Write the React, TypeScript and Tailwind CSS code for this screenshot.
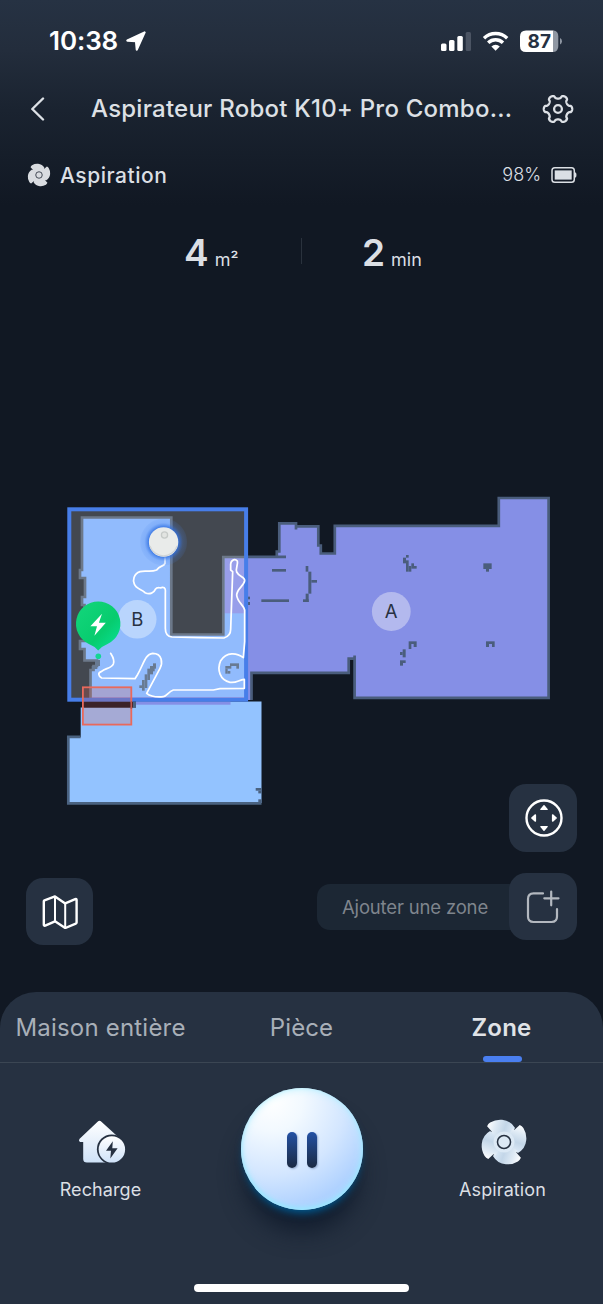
import React from "react";

const gearPath = (() => {
  const pts: string[] = [];
  for (let i = 0; i < 240; i++) {
    const a = (i / 240) * Math.PI * 2;
    const c = Math.cos(6 * a);
    const wave = Math.sign(c) * Math.pow(Math.abs(c), 0.45);
    const r = 12.3 + 1.9 * wave;
    pts.push(`${(r * Math.cos(a)).toFixed(2)},${(r * Math.sin(a)).toFixed(2)}`);
  }
  return `M${pts.join("L")}Z`;
})();

const BLADE = "M-17.6 -16.4Q-16.6 -18.8 -14.5 -20.2Q-8.6 -23.8 -2 -23.2Q7 -22.4 11.5 -14.5L0 0L-14 -9L-12.8 -11Z";

function Fan({ className, fill, ring }: { className: string; fill: string; ring: string }) {
  return (
    <svg viewBox="-25 -25 50 50" className={className}>
      <defs>
        <linearGradient id="blade" gradientUnits="userSpaceOnUse" x1="-18" y1="-18" x2="12" y2="-8">
          <stop offset="0" stopColor="#ffffff" />
          <stop offset=".3" stopColor="#dde9f4" />
          <stop offset=".6" stopColor="#c3d6e8" />
          <stop offset="1" stopColor="#e3effb" />
        </linearGradient>
      </defs>
      {[0, 90, 180, 270].map((r) => (
        <path key={r} d={BLADE} fill={fill} transform={`rotate(${r})`} />
      ))}
      <circle r="11" fill={fill === "url(#blade)" ? "#dce9f5" : fill} />
      <circle r="6.8" fill="none" stroke={ring} strokeWidth="1.6" />
    </svg>
  );
}

function StatusBar() {
  return (
    <div className="flex h-[81px] items-center pl-[49px] pr-[40px]">
      <span className="w-[71px] text-[26px] font-semibold leading-none tracking-[-0.1px] text-white">10:38</span>
      <svg viewBox="0 0 20 20" className="ml-[6px] h-[20px] w-[20px]">
        <path d="M18.6 1.4L1.4 9.6L10 10.2L10.8 18.6Z" fill="#fff" stroke="#fff" strokeWidth="2.2" strokeLinejoin="round" />
      </svg>
      <div className="flex-1" />
      <svg viewBox="0 0 122 24" className="h-[24px] w-[122px]">
        <rect x="0" y="14.5" width="5.5" height="7.5" rx="1.5" fill="#fff" />
        <rect x="8" y="11" width="5.5" height="11" rx="1.5" fill="#fff" />
        <rect x="16.3" y="7" width="5.5" height="15" rx="1.5" fill="#fff" />
        <rect x="24.7" y="3" width="5.3" height="19" rx="1.5" fill="#4b5463" />
        <g fill="none" stroke="#fff" strokeWidth="3.4">
          <path d="M43 9.2A16.8 16.8 0 0 1 66.2 9.2" />
          <path d="M47.2 13.7A10.6 10.6 0 0 1 62 13.7" />
        </g>
        <path d="M50.4 17.5A6 6 0 0 1 58.8 17.5L54.6 21.8Z" fill="#fff" />
        <path d="M85 1.5H112.5V22.9H85Q79 22.9 79 16.9V7.5Q79 1.5 85 1.5Z" fill="#fff" />
        <path d="M112.5 1.5Q117.3 2 117.3 7.5V16.9Q117.3 22.4 112.5 22.9Z" fill="#8f97a3" />
        <path d="M119 9Q121 10 121 12.2Q121 14.4 119 15.4Z" fill="#8f97a3" />
        <text x="98.3" y="19.1" textAnchor="middle" fontSize="19" fontWeight="700" fill="#263142" fontFamily="Inter, sans-serif">87</text>
      </svg>
    </div>
  );
}

function TopBar() {
  return (
    <div className="flex h-[55px] items-center pl-[30px] pr-[29px]">
      <svg viewBox="0 0 15 24" className="h-[24px] w-[15px]" fill="none" stroke="#dde1e6" strokeWidth="2.4" strokeLinecap="round" strokeLinejoin="round">
        <path d="M13 1.5L2.3 12L13 22.5" />
      </svg>
      <h1 className="ml-[46px] flex-1 whitespace-nowrap text-[24px] font-medium leading-none tracking-[0.23px] text-[#dde0e5]">
        Aspirateur Robot K10+ Pro Combo...
      </h1>
      <svg viewBox="-16 -16 32 32" className="h-[32px] w-[32px] shrink-0" fill="none" stroke="#dde1e6" strokeWidth="2.3" strokeLinejoin="round">
        <path d={gearPath} />
        <circle r="3.9" />
      </svg>
    </div>
  );
}

const R = ({ d }: { d: number[][] }) => (
  <>
    {d.map(([x1, y1, x2, y2], i) => (
      <rect key={i} x={x1} y={y1} width={x2 - x1} height={y2 - y1} />
    ))}
  </>
);

function FloorMap() {
  return (
    <svg viewBox="0 290 603 702" className="block h-[702px] w-[603px]" fontFamily="Inter, sans-serif">
      <defs>
        <linearGradient id="pin" x1="0" y1="0" x2="1" y2="1">
          <stop offset="0" stopColor="#14d67c" />
          <stop offset=".6" stopColor="#07cc6e" />
          <stop offset="1" stopColor="#08e39a" />
        </linearGradient>
        <radialGradient id="glow">
          <stop offset=".6" stopColor="#2f6fe0" stopOpacity=".95" />
          <stop offset=".76" stopColor="#3f7ce8" stopOpacity=".4" />
          <stop offset=".82" stopColor="#4a86ee" stopOpacity=".22" />
          <stop offset="1" stopColor="#4a86ee" stopOpacity=".1" />
        </radialGradient>
      </defs>

      {/* living area A */}
      <path
        d="M246 556.8H276.8V551.5H279.3V523.3H296V526.3H318.3V545.5H320.8V553.5H334.8V525.8H498.8V498H548.6V697.8H354.6V658.7H348.7V672.8H251.5V700H246Z"
        fill="#858fe6"
      />
      <path
        d="M246 556.8H286M276.8 556.8V551.5H279.3V523.3H296V529.5M296 526.3H318.3V545.5H320.8V553.5H334.8V525.8H498.8V498H548.6V697.8H354.6V655.5M354.6 658.7H348.7V672.8H251.5V700"
        fill="none"
        stroke="#4a5d7c"
        strokeWidth="2.7"
      />
      <g transform="translate(240 485) scale(.33333)" fill="#4a5d7c">
        <R
          d={[
            [96, 252, 138, 260], [64, 343, 147, 351], [197, 243, 205, 260], [205, 260, 214, 326], [214, 285, 231, 293],
            [197, 326, 206, 351], [189, 343, 206, 351], [22, 335, 30, 343], [22, 351, 30, 360],
            [498, 210, 506, 218], [489, 218, 498, 235], [498, 226, 506, 260], [506, 243, 514, 260], [514, 235, 522, 251], [522, 243, 530, 251],
            [730, 235, 755, 252], [738, 252, 747, 260],
            [738, 469, 764, 477], [738, 477, 747, 486], [756, 477, 764, 486],
            [506, 469, 530, 477], [506, 477, 514, 492], [521, 477, 530, 486],
            [488, 493, 497, 517], [480, 501, 488, 510], [480, 526, 497, 534], [480, 534, 489, 542],
          ]}
        />
      </g>

      {/* room below the selection */}
      <path d="M80.7 707.5H136V701.5H261.5V803H68.3V737H80.7Z" fill="#93c3ff" />
      <path d="M80.7 736.8H68.3V803.4H261.5" fill="none" stroke="#4a6280" strokeWidth="2.7" />
      <g fill="#4a6280">
        <rect x="133" y="702" width="3" height="5.5" />
        <rect x="255.7" y="788" width="5.8" height="2.7" />
        <rect x="258.3" y="790.7" width="3.2" height="2.7" />
        <rect x="258.3" y="799.3" width="3.2" height="3" />
      </g>
      <rect x="136" y="701.5" width="94.5" height="3.2" fill="#858fe6" />

      {/* selected zone */}
      <rect x="69" y="509" width="177" height="191" fill="#434850" />
      <path
        d="M82 517.5H171.3V634.5H223.3V557H246V699H90.5V670H93.5V666H97V660.5H84.5V649H80V641H84.5V605H82V597H85V578H80V570H82Z"
        fill="#91bbfd"
      />
      <rect x="224.5" y="558" width="21.5" height="55.3" fill="#989eea" />
      <rect x="92" y="697" width="154" height="3" fill="#a09fe0" />
      <path
        d="M246 557H223.3V634.5H171.3V517.5H82V570H80V578H85V597H82V605H84.5V641H80V649H84.5V660.5H97V666H93.5V670H90.5V699"
        fill="none"
        stroke="#6c7889"
        strokeWidth="2.7"
      />
      <rect x="69.3" y="509.3" width="176.8" height="190.4" fill="none" stroke="#477ee9" strokeWidth="4" />

      <g transform="translate(50 640) scale(.33333)" fill="#687a92">
        <R
          d={[
            [309, 70, 318, 86], [300, 78, 309, 103], [292, 86, 300, 120], [284, 103, 292, 144], [309, 78, 314, 94], [276, 120, 284, 152], [268, 136, 276, 144],
            [540, 70, 567, 78], [526, 78, 544, 86], [526, 86, 533, 101], [533, 93, 541, 101], [559, 78, 567, 86], [135, 60, 150, 78], [125, 78, 142, 87],
          ]}
        />
      </g>

      <g fill="none" stroke="#fff" strokeWidth="5.2" strokeLinejoin="round" strokeLinecap="round">
        <path
          transform="translate(50 490) scale(.33333)"
          d="M345 200V220C340 232 330 224 320 240C300 248 288 240 270 245C250 252 248 272 253 282C258 297 275 297 285 308C300 315 312 308 316 298C322 289 330 296 338 292C346 292 347 300 346 310V415C346 432 352 440 366 441L450 443L522 444C535 440 542 430 542 418L548 245L542 240V222C544 208 556 206 562 213C565 222 556 236 560 246C568 262 585 260 584 272C582 288 562 295 560 315C562 337 580 343 584 360V455L580 503C560 488 530 485 512 512C500 540 510 570 540 577C560 580 565 570 583 568V595L510 596L490 600H370C355 605 350 620 340 620C320 622 300 618 290 610L330 535C338 520 338 490 308 490C285 492 280 525 262 555L255 566L155 564C145 558 142 548 155 544C165 535 185 535 190 522C195 508 185 495 182 490"
        />
      </g>

      <rect x="82.9" y="687.3" width="48.4" height="37.3" fill="#e05a50" fillOpacity=".24" stroke="#e8695c" strokeWidth="1.8" />
      <rect x="84" y="702.3" width="49" height="5.2" fill="#3b2228" />
      <path d="M131.3 701V709" stroke="#c05a52" strokeWidth="1.7" />

      <circle cx="163.6" cy="542" r="23.5" fill="url(#glow)" />
      <circle cx="163.6" cy="542" r="14.7" fill="#e9ebea" />
      <path d="M150 546A14.2 14.2 0 0 0 177 546" fill="none" stroke="#d2d5d6" strokeWidth="1.2" />
      <circle cx="164.5" cy="535" r="3.1" fill="#e2e4e2" stroke="#c6cac8" strokeWidth="1.3" />

      <circle cx="137.2" cy="619.3" r="19.3" fill="#b9d5fd" />
      <text x="137.2" y="626" textAnchor="middle" fontSize="18.5" fill="#283242">B</text>
      <circle cx="391.3" cy="611.5" r="19.4" fill="#b3b9ee" />
      <text x="391.1" y="618.3" textAnchor="middle" fontSize="18.5" fill="#283242">A</text>

      <path d="M98.2 601.5A22.3 22.3 0 0 1 108 643.8Q102.5 646 98.2 650.5Q94 646 88.4 643.8A22.3 22.3 0 0 1 98.2 601.5Z" fill="url(#pin)" />
      <path d="M102 613.7L90.4 626.2H97L94.4 635.8L105.8 622.7H98.9Z" fill="#fff" />
      <circle cx="98.3" cy="656.3" r="2.8" fill="#14d695" />
    </svg>
  );
}

function PanIcon() {
  return (
    <svg viewBox="-20 -20 40 40" className="h-[40px] w-[40px] translate-x-[1px]">
      <circle r="17.5" fill="none" stroke="#fff" strokeWidth="2.4" />
      {[0, 90, 180, 270].map((r) => (
        <path key={r} d="M-3.1 -8.6H3.1L0 -12.2Z" transform={`rotate(${r})`} fill="#fff" stroke="#fff" strokeWidth="1.4" strokeLinejoin="round" />
      ))}
    </svg>
  );
}

function Controls() {
  return (
    <div className="absolute inset-x-0 bottom-[47px] flex items-end justify-between pl-[26px] pr-[26px]">
      <button className="grid h-[67px] w-[67px] place-items-center rounded-[17px] bg-[#263141]">
        <svg viewBox="0 0 36 34" className="h-[34px] w-[36px]" fill="none" stroke="#fff" strokeWidth="2.4" strokeLinejoin="round">
          <path d="M1.8 6.3Q1.8 5.6 2.5 5.3L13 1.4L23.2 8.4L33.2 4.2Q34.6 3.6 34.6 5V27.6Q34.6 28.4 33.8 28.7L23.2 33L13 26.3L3.2 30.6Q1.8 31 1.8 29.6Z" />
          <path d="M13 1.4V26.3M23.2 8.4V33" strokeWidth="2" />
        </svg>
      </button>
      <div className="mb-[5px] flex flex-col items-end gap-[21px]">
        <button className="grid h-[68px] w-[68px] place-items-center rounded-[17px] bg-[#263141]">
          <PanIcon />
        </button>
        <div className="flex items-center">
          <span className="-mr-[16px] flex h-[46px] w-[208px] items-center rounded-l-[13px] bg-[#1c2734] pl-[25px] pt-[2px] text-[18.5px] leading-none tracking-[-0.17px] text-[#7f858d]">
            Ajouter une zone
          </span>
          <button className="relative grid h-[67px] w-[68px] place-items-center rounded-[17px] bg-[#263141]">
            <svg viewBox="0 0 34 34" className="h-[34px] w-[34px]" fill="none" stroke="#b3b8bf" strokeWidth="2.2" strokeLinecap="round">
              <path d="M17 3.4H7.5Q2 3.4 2 9V26.5Q2 32 7.5 32H25.5Q31 32 31 26.5V19" />
              <path d="M25.2 1.5V15.3M18.3 8.3H32.5" />
            </svg>
          </button>
        </div>
      </div>
    </div>
  );
}

function BottomSheet() {
  return (
    <section className="flex h-[312px] flex-col rounded-t-[36px] bg-[#263141]">
      <nav className="grid h-[71px] grid-cols-3 border-b border-[#3b4653] text-[24px] leading-none text-[#a8afb8]">
        <div className="flex justify-center pt-[24px]">
          <span className="whitespace-nowrap tracking-[0.2px]">Maison entière</span>
        </div>
        <div className="flex justify-center pt-[24px] tracking-[0.1px]">Pièce</div>
        <div className="flex flex-col items-center justify-between pt-[24px] font-semibold text-[#e0e3e7]">
          <span className="-translate-x-[1px] tracking-[0.2px]">Zone</span>
          <span className="h-[6.5px] w-[39px] rounded-[3px] bg-[#4a7ff0]" />
        </div>
      </nav>
      <div className="grid grid-cols-3 text-[18px] leading-none text-[#dbdfe4]">
        <div className="flex flex-col items-center pt-[57px]">
          <svg viewBox="0 0 48 44" className="h-[44px] w-[48px] translate-x-[1px]">
            <defs>
              <linearGradient id="house" x1="0" y1="0" x2="0" y2="1">
                <stop offset="0" stopColor="#ffffff" />
                <stop offset="1" stopColor="#cfe2f8" />
              </linearGradient>
            </defs>
            <path d="M19.6 1.7Q21.5 0 23.4 1.7L41 17.8V42.5H9Q5.2 42.5 5.2 39V22H2Q.3 21.2 1.4 19Z" fill="url(#house)" />
            <rect x="34" y="30" width="10" height="14" fill="#263141" />
            <circle cx="33.7" cy="29.3" r="14.8" fill="#263141" />
            <circle cx="33.9" cy="29.4" r="13.2" fill="url(#house)" />
            <path d="M34.8 21.3L28 30.8H33L32.3 38.6L39.6 28.3H34.3Z" fill="#263141" />
          </svg>
          <span className="mt-[17px] tracking-[0.1px]">Recharge</span>
        </div>
        <div className="flex justify-center pt-[25px]">
          <button className="flex h-[122px] w-[122px] items-center justify-center gap-[10px] rounded-full bg-[radial-gradient(circle_at_25%_10%,#ffffff_0%,#f2f9ff_22%,#d3e6ff_52%,#b0d2ff_76%,#9ccbff_100%)] shadow-[inset_0_0_9px_#b4f0ff,inset_0_-2px_4px_#7fdcff,0_6px_8px_-3px_#005d96,0_25px_24px_-4px_#111c2d]">
            <span className="h-[36px] w-[10px] translate-y-[1px] rounded-[5px] bg-linear-to-b from-[#2351a5] to-[#1b2a43] shadow-[1px_1px_2px_#94abd0]" />
            <span className="h-[36px] w-[10px] translate-y-[1px] rounded-[5px] bg-linear-to-b from-[#2351a5] to-[#1b2a43] shadow-[1px_1px_2px_#94abd0]" />
          </button>
        </div>
        <div className="flex flex-col items-center pt-[55px]">
          <Fan className="h-[48px] w-[48px] translate-x-[1px]" fill="url(#blade)" ring="#263141" />
          <span className="mt-[15px] tracking-[0.1px]">Aspiration</span>
        </div>
      </div>
      <div className="mx-auto mt-auto mb-[12.5px] h-[8px] w-[215px] rounded-full bg-white" />
    </section>
  );
}

export default function App() {
  return (
    <main className="flex h-[1304px] w-[603px] flex-col overflow-hidden bg-[#111823] bg-[linear-gradient(to_bottom,#263243_0px,#232d3c_50px,#1a2330_110px,#111823_205px)] font-['Inter',sans-serif]">
      <StatusBar />
      <TopBar />
      <div className="flex h-[78px] items-center pl-[27px] pr-[27px] text-[#dbdfe4]">
        <Fan className="h-[24px] w-[24px]" fill="#d9dce0" ring="#17202c" />
        <span className="ml-[9px] flex-1 text-[21px] font-medium leading-none tracking-[0.53px]">Aspiration</span>
        <span className="text-[18px] font-light leading-none">98%</span>
        <svg viewBox="0 0 26 18" className="ml-[9px] h-[18px] w-[26px] translate-x-[1px]">
          <rect x="1" y="1.8" width="22.3" height="14.4" rx="2.8" fill="none" stroke="#dbdfe4" strokeWidth="1.5" />
          <rect x="3.7" y="4.4" width="17" height="9.2" fill="#dbdfe4" />
          <path d="M24 6.3Q25.5 6.3 25.5 9Q25.5 11.7 24 11.7Z" fill="#dbdfe4" />
        </svg>
      </div>
      <div className="grid h-[76px] grid-cols-[301px_1px_301px] items-start pt-[24px] text-[#dbdfe4]">
        <div className="-mt-[4px] flex items-baseline gap-[6px] pl-[184px] leading-none">
          <span className="text-[37px] font-semibold leading-none">4</span>
          <span className="text-[18px] leading-none">m²</span>
        </div>
        <div className="h-[26px] w-px bg-[#2a323d]" />
        <div className="-mt-[4px] flex items-baseline gap-[6px] pl-[60px] leading-none">
          <span className="text-[37px] font-semibold leading-none">2</span>
          <span className="text-[18px] leading-none">min</span>
        </div>
      </div>
      <div className="relative h-[702px] shrink-0">
        <FloorMap />
        <Controls />
      </div>
      <BottomSheet />
    </main>
  );
}
